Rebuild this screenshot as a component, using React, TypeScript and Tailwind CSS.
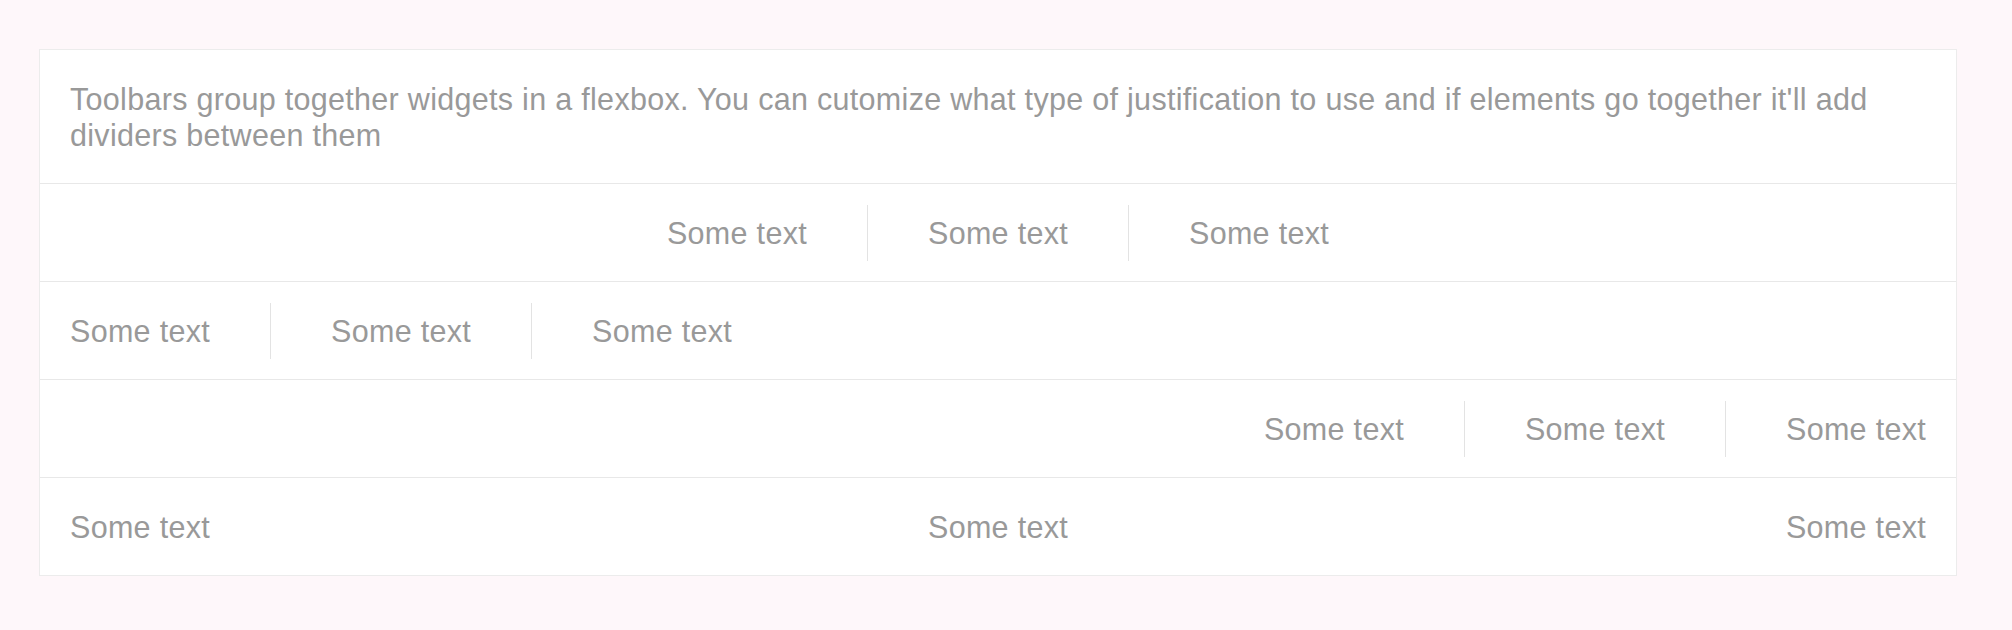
import React from "react";

const Item = ({ children }: { children: React.ReactNode }) => (
  <div className="px-[30px] leading-[36px] whitespace-nowrap">{children}</div>
);

const Divider = () => <div className="mx-[30px] h-[56px] w-px bg-[#e3e3e3]" />;

const Row = ({ justify, dividers = true }: { justify: string; dividers?: boolean }) => (
  <div className={`flex h-[98px] items-center border-t border-[#e8e8e8] ${justify}`}>
    <Item>Some text</Item>
    {dividers && <Divider />}
    <Item>Some text</Item>
    {dividers && <Divider />}
    <Item>Some text</Item>
  </div>
);

export default function App() {
  return (
    <div
      className="min-h-[630px] w-full bg-[#fef7fa] pt-[49px] pl-[39px] text-[30.5px] tracking-[0.3px] text-[#999999]"
      style={{ fontFamily: '"Liberation Sans", Arial, sans-serif' }}
    >
      <div className="w-[1918px] border border-[#ececec] bg-white">
        <div className="h-[133px] px-[30px] pt-[31px] leading-[36px]">
          Toolbars group together widgets in a flexbox. You can cutomize what type of justification to use and if
          elements go together it'll add dividers between them
        </div>
        <Row justify="justify-center" />
        <Row justify="justify-start" />
        <Row justify="justify-end" />
        <Row justify="justify-between" dividers={false} />
      </div>
    </div>
  );
}
